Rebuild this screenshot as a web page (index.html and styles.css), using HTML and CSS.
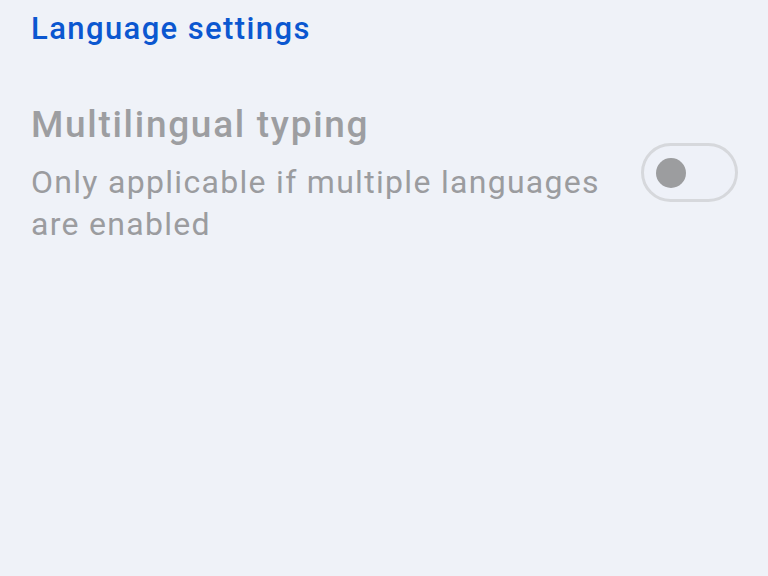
FILE: index.html
```html
<!DOCTYPE html>
<html>
<head>
<meta charset="utf-8">
<link rel="stylesheet" href="styles.css">
</head>
<body>
<div class="page">
  <h1 class="section-title">Language settings</h1>
  <div class="row">
    <div class="text">
      <div class="row-title">Multilingual typing</div>
      <div class="row-sub">Only applicable if multiple languages are enabled</div>
    </div>
    <div class="switch"><span class="knob"></span></div>
  </div>
</div>
</body>
</html>
```
FILE: styles.css
```css
html, body {
  margin: 0;
  padding: 0;
  background: #eff2f8;
  width: 768px;
  height: 576px;
  overflow: hidden;
}
.page {
  padding: 0 30px 0 31px;
  font-family: Roboto, "Noto Sans", sans-serif;
}
.section-title {
  margin: 0;
  padding-top: 9px;
  font-size: 31px;
  line-height: 40px;
  font-weight: 500;
  color: #0b57d0;
  letter-spacing: 1.4px;
}
.row {
  display: flex;
  align-items: flex-start;
  gap: 10px;
  margin-top: 52px;
}
.text {
  flex: 1;
}
.row-title {
  font-size: 37px;
  line-height: 48px;
  font-weight: 500;
  color: #9d9ea1;
  letter-spacing: 1.7px;
}
.row-sub {
  font-size: 32px;
  line-height: 42px;
  color: #9b9c9f;
  margin-top: 12px;
  letter-spacing: 1.3px;
}
.switch {
  height: 53px;
  width: 79px;
  border: 3px solid #d6d8dc;
  border-radius: 30px;
  background: #eef1f8;
  display: flex;
  align-items: center;
  padding-left: 12px;
  box-sizing: content-box;
  margin-top: 42px;
}
.knob {
  width: 30px;
  height: 30px;
  border-radius: 50%;
  background: #9c9d9f;
}
```
